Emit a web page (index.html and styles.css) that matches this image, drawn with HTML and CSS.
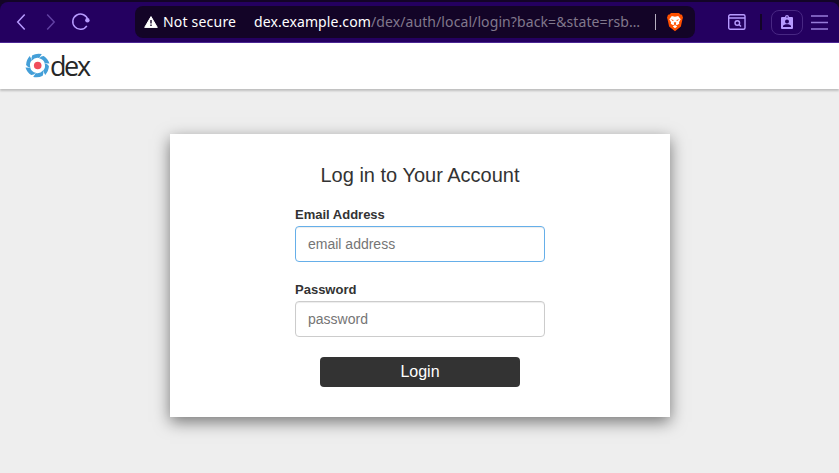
FILE: index.html
```html
<!DOCTYPE html>
<html lang="en">
<head>
<meta charset="utf-8">
<title>dex</title>
<link rel="stylesheet" href="styles.css">
</head>
<body>
<header class="chrome">
  <div class="toolbar">
    <nav class="history">
      <svg class="nav-icon" width="20" height="20" viewBox="0 0 20 20"><path d="M13.700 2.500 6.700 10l7 7.500"/></svg>
      <svg class="nav-icon nav-icon--off" width="20" height="20" viewBox="0 0 20 20"><path d="M6.200 2.500 13.200 10l-7 7.500"/></svg>
      <svg class="nav-icon" width="20" height="20" viewBox="0 0 20 20"><path d="M15.800 13.800A7.600 7.600 0 1 1 16.800 8"/><circle class="dot" cx="16.400" cy="8.300" r="2.200"/></svg>
    </nav>
    <div class="address">
      <svg class="warning" width="14" height="12" viewBox="0 0 14 12"><path d="M7 .6 13.300 11.400H.7z" fill="#fff" stroke="#fff" stroke-linejoin="round"/><path d="M7 4v3.500M7 8.600v1.500" stroke="#130427" stroke-width="1.400"/></svg>
      <span class="secure">Not secure</span>
      <span class="url">dex.example.com<span class="path">/dex/auth/local/login?back=&amp;state=rsb…</span></span>
      <span class="rule"></span>
      <svg class="lion" width="18" height="20" viewBox="0 0 18 20"><path fill="#ff5000" d="M5 1h8l1.500 1.500 1.500.2 1 3-.6 1.800-1.500 7L9 19.200 3.100 14.500l-1.500-7L1 5.700l1-3 1.500-.2z"/><path fill="#fff" d="m5.800 4 3.200.7 3.200-.7 2.500 3.200-1.700 3 .2 1.600-2.400 1.500-1.200-1 .7-1.600-1.300-.8-1.300.8.7 1.600-1.200 1-2.400-1.500.2-1.600-1.700-3zM9 13l2.200 1.500L9 16.200l-2.200-1.700z"/><path fill="#ff5000" d="m4.600 7.300 3 .7-.5 1.200zM13.400 7.300l-3 .7.5 1.200z"/></svg>
    </div>
    <svg class="search" width="18" height="16" viewBox="0 0 18 16"><rect x=".7" y=".7" width="16.300" height="14.500" rx="1.500"/><path d="M1 4h16m-6 6.500 2 2"/><circle cx="9.300" cy="9" r="2.300"/></svg>
    <span class="divider"></span>
    <span class="profile"><svg width="12" height="15" viewBox="0 0 12 15"><path fill="#b79aff" fill-rule="evenodd" d="M1 2H4a2 2 0 0 1 4 0h3Q12 2 12 3v10q0 1-1 1H1Q0 14 0 13V3Q0 2 1 2zM6 1.200a.8.8 0 1 0 0 1.600.8.8 0 0 0 0-1.600zM6 4.500a2 2 0 1 0 0 4 2 2 0 0 0 0-4zM2 12h8v-.8C10 9.800 7.500 9.300 6 9.300s-4 .5-4 1.900z"/></svg></span>
    <svg class="menu" width="17" height="15" viewBox="0 0 17 15"><path d="M0 1h17M0 7.500h17M0 14h17"/></svg>
  </div>
</header>
<div class="navbar">
  <svg class="logo" width="25" height="26" viewBox="0 0 25 26">
    <g fill="#449fd8">
      <path id="blade" d="M7.300 2.300Q11.500 0 16.800 1.100L14.200 5.100Q10 4 7 7.500Q6 4.500 7.300 2.300z"/>
      <use href="#blade" transform="rotate(60 12.500 12.500)"/>
      <use href="#blade" transform="rotate(120 12.500 12.500)"/>
      <use href="#blade" transform="rotate(180 12.500 12.500)"/>
      <use href="#blade" transform="rotate(240 12.500 12.500)"/>
      <use href="#blade" transform="rotate(300 12.500 12.500)"/>
    </g>
    <circle cx="12.700" cy="12.500" r="3.800" fill="#f04d5c"/>
  </svg>
  <span class="wordmark">dex</span>
</div>
<main class="page">
  <section class="panel">
    <h2 class="heading">Log in to Your Account</h2>
    <form class="form">
      <div class="field"><label for="login">Email Address</label><input class="input input--focus" id="login" type="text" placeholder="email address"></div>
      <div class="field"><label for="password">Password</label><input class="input" id="password" type="password" placeholder="password"></div>
      <button class="submit" type="button">Login</button>
    </form>
  </section>
</main>
</body>
</html>
```
FILE: styles.css
```css
* { box-sizing: border-box; }
body {
  margin: 0;
  height: 473px;
  overflow: hidden;
  background: #eee;
  color: #333;
  font-family: "Liberation Sans", Arial, sans-serif;
}
.chrome { background: #130427; padding-top: 2px; }
.toolbar {
  display: flex;
  align-items: center;
  height: 41px;
  background: #240060;
  border-bottom: 1px solid #4b2694;
  border-radius: 8px 8px 0 0;
}
.toolbar > * { flex-shrink: 0; }
.history { display: flex; gap: 10px; width: 135px; padding-left: 11px; }
.nav-icon { fill: none; stroke: #b79aff; stroke-width: 1.5; }
.nav-icon--off { opacity: .42; }
.dot { fill: #b79aff; stroke: none; }
.address {
  display: flex;
  align-items: center;
  width: 560px;
  height: 32px;
  padding-left: 9px;
  border-radius: 8px;
  background: #130427;
  color: #fff;
  font: 14px/20px "Noto Sans", sans-serif;
  white-space: nowrap;
}
.secure { width: 91px; margin-left: 5px; letter-spacing: .2px; }
.url { width: 401px; letter-spacing: .095px; }
.path { color: #81788c; }
.rule { width: 1px; height: 16px; margin-right: 10px; background: #b6afc0; }
.search { margin-left: 33px; fill: none; stroke: #b79aff; stroke-width: 1.4; }
.divider { width: 2px; height: 16px; margin-left: 14px; background: #130427; }
.profile {
  display: flex;
  align-items: center;
  justify-content: center;
  width: 32px;
  height: 25px;
  margin: 0 8px 0 9px;
  border: 1px solid #482783;
  border-radius: 8px;
}
.menu { stroke: #977bd9; stroke-width: 1.6; }
.navbar {
  display: flex;
  align-items: flex-start;
  height: 46px;
  padding: 4px 25px 0;
  background: #fff;
  box-shadow: 0 2px 2px rgba(0, 0, 0, .2);
}
.logo { margin-top: 6px; }
.wordmark {
  color: #272727;
  font: 27px/38px "Open Sans", sans-serif;
  letter-spacing: -2.4px;
}
.page { display: flex; justify-content: center; padding: 45px 0 0 1px; }
.panel {
  width: 500px;
  height: 283px;
  padding-top: 30px;
  background: #fff;
  box-shadow: 0 5px 15px rgba(0, 0, 0, .5);
}
.heading { margin: 0 0 20px; font-size: 20px; font-weight: 500; line-height: 23px; text-align: center; }
.form { display: flex; flex-direction: column; align-items: center; }
.field { width: 250px; margin-bottom: 20px; }
.field label { display: block; margin-bottom: 4px; font-size: 13px; font-weight: 600; line-height: 15px; }
.input {
  display: block;
  width: 250px;
  height: 36px;
  padding: 6px 12px;
  border: 1px solid #ccc;
  border-radius: 4px;
  box-shadow: inset 0 1px 1px rgba(0, 0, 0, .075);
  color: #666;
  font: 14px "Liberation Sans", Arial, sans-serif;
}
.input--focus { border-color: #66afe9; }
.submit {
  width: 200px;
  height: 30px;
  padding: 0;
  border: 0;
  border-radius: 4px;
  background: #333;
  color: #fff;
  font: 16px "Liberation Sans", Arial, sans-serif;
}
```
